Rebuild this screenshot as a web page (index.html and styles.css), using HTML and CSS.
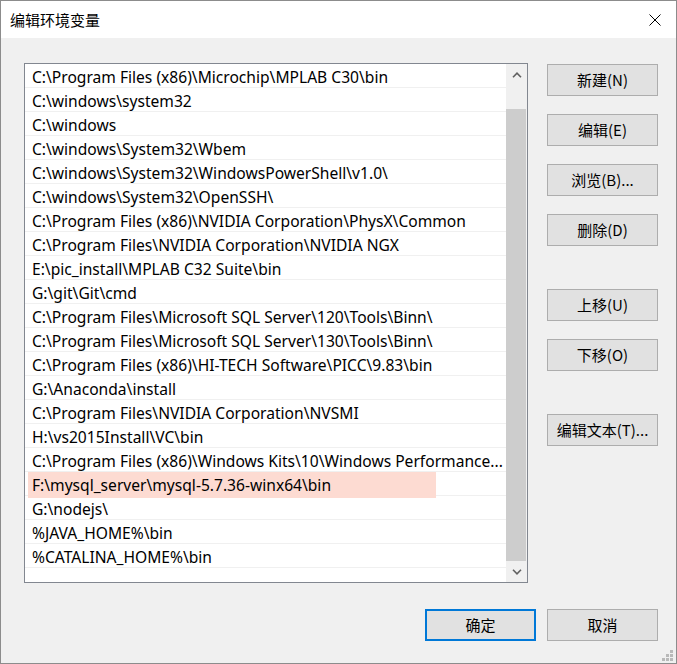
FILE: index.html
```html
<!DOCTYPE html>
<html lang="zh-CN">
<head>
  <meta charset="UTF-8">
  <title>编辑环境变量</title>
  <link rel="stylesheet" href="styles.css">
</head>
<body>
  <div class="dialog">
    <div class="titlebar">
      <span class="title">编辑环境变量</span>
      <svg class="close" width="12" height="12" viewBox="0 0 12 12">
        <path d="M0.5 0.5 L11.5 11.5 M11.5 0.5 L0.5 11.5" stroke="#000" stroke-width="1" fill="none"/>
      </svg>
    </div>

    <div class="content">
      <div class="main">
        <div class="listbox">
          <div class="rows">
            <div class="row"><span>C:\Program Files (x86)\Microchip\MPLAB C30\bin</span></div>
            <div class="row"><span>C:\windows\system32</span></div>
            <div class="row"><span>C:\windows</span></div>
            <div class="row"><span>C:\windows\System32\Wbem</span></div>
            <div class="row"><span>C:\windows\System32\WindowsPowerShell\v1.0\</span></div>
            <div class="row"><span>C:\windows\System32\OpenSSH\</span></div>
            <div class="row"><span>C:\Program Files (x86)\NVIDIA Corporation\PhysX\Common</span></div>
            <div class="row"><span>C:\Program Files\NVIDIA Corporation\NVIDIA NGX</span></div>
            <div class="row"><span>E:\pic_install\MPLAB C32 Suite\bin</span></div>
            <div class="row"><span>G:\git\Git\cmd</span></div>
            <div class="row"><span>C:\Program Files\Microsoft SQL Server\120\Tools\Binn\</span></div>
            <div class="row"><span>C:\Program Files\Microsoft SQL Server\130\Tools\Binn\</span></div>
            <div class="row"><span>C:\Program Files (x86)\HI-TECH Software\PICC\9.83\bin</span></div>
            <div class="row"><span>G:\Anaconda\install</span></div>
            <div class="row"><span>C:\Program Files\NVIDIA Corporation\NVSMI</span></div>
            <div class="row"><span>H:\vs2015Install\VC\bin</span></div>
            <div class="row"><span>C:\Program Files (x86)\Windows Kits\10\Windows Performance...</span></div>
            <div class="row marked"><span>F:\mysql_server\mysql-5.7.36-winx64\bin</span></div>
            <div class="row"><span>G:\nodejs\</span></div>
            <div class="row"><span>%JAVA_HOME%\bin</span></div>
            <div class="row"><span>%CATALINA_HOME%\bin</span></div>
          </div>
          <div class="scrollbar">
            <div class="arrow">
              <svg width="10" height="6" viewBox="0 0 10 6">
                <path d="M1 5.2 L5 1.2 L9 5.2" stroke="#606060" stroke-width="1.6" fill="none"/>
              </svg>
            </div>
            <div class="track"></div>
            <div class="thumb"></div>
            <div class="arrow">
              <svg width="10" height="6" viewBox="0 0 10 6">
                <path d="M1 0.8 L5 4.8 L9 0.8" stroke="#606060" stroke-width="1.6" fill="none"/>
              </svg>
            </div>
          </div>
        </div>

        <div class="side">
          <button class="btn">新建(N)</button>
          <button class="btn">编辑(E)</button>
          <button class="btn">浏览(B)...</button>
          <button class="btn">删除(D)</button>
          <button class="btn group">上移(U)</button>
          <button class="btn">下移(O)</button>
          <button class="btn group">编辑文本(T)...</button>
        </div>
      </div>

      <div class="footer">
        <button class="btn primary">确定</button>
        <button class="btn">取消</button>
      </div>
    </div>

    <svg class="grip" width="12" height="12" viewBox="0 0 12 12">
      <rect x="8" y="0" width="3" height="3" fill="#b9b9b9"/>
      <rect x="4" y="4" width="3" height="3" fill="#b9b9b9"/>
      <rect x="8" y="4" width="3" height="3" fill="#b9b9b9"/>
      <rect x="0" y="8" width="3" height="3" fill="#b9b9b9"/>
      <rect x="4" y="8" width="3" height="3" fill="#b9b9b9"/>
      <rect x="8" y="8" width="3" height="3" fill="#b9b9b9"/>
    </svg>
  </div>
</body>
</html>
```

FILE: styles.css
```css
body {
  margin: 0;
  font-family: "Noto Sans", "Noto Sans CJK SC", sans-serif;
  font-size: 15px;
  color: #000;
  background: #fff;
}

.dialog {
  position: relative;
  box-sizing: border-box;
  width: 677px;
  height: 664px;
  border: 1px solid #8c8c8c;
  background: #f0f0f0;
}

.titlebar {
  height: 37px;
  background: #fff;
  display: flex;
  align-items: center;
  justify-content: space-between;
  padding: 0 15px 0 9px;
}

.title {
  font-size: 15px;
  font-family: "Noto Sans CJK SC", sans-serif;
}

.content {
  padding: 25px 18px 0 23px;
}

.main {
  display: flex;
  gap: 19px;
}

.listbox {
  display: flex;
  width: 504px;
  height: 520px;
  box-sizing: border-box;
  border: 1px solid #828790;
  background: #fff;
}

.rows {
  flex: 1;
  min-width: 0;
}

.row {
  position: relative;
  height: 21px;
  padding: 2px 0 0 7px;
  border-bottom: 1px solid #f0f0f0;
  font-size: 15.6px;
  line-height: 23px;
  white-space: nowrap;
}

.row span {
  position: relative;
}

.row.marked::before {
  content: "";
  position: absolute;
  left: 3px;
  top: 0;
  width: 408px;
  height: 26px;
  background: #fddbd2;
}

.scrollbar {
  width: 21px;
  display: flex;
  flex-direction: column;
  background: #f0f0f0;
}

.arrow {
  height: 21px;
  display: flex;
  align-items: center;
  justify-content: center;
}

.track {
  flex: 1;
}

.thumb {
  height: 452px;
  margin-right: 1px;
  background: #cdcdcd;
}

.side {
  display: flex;
  flex-direction: column;
  gap: 18px;
  padding-top: 1px;
}

.btn {
  box-sizing: border-box;
  width: 111px;
  height: 32px;
  padding: 0 0 2px;
  border: 1px solid #adadad;
  background: #e1e1e1;
  font-family: "Noto Sans CJK SC", sans-serif;
  font-size: 15px;
  color: #000;
}

.btn.group {
  margin-top: 25px;
}

.btn.primary {
  border: 2px solid #0078d7;
}

.footer {
  display: flex;
  justify-content: flex-end;
  gap: 11px;
  margin-top: 26px;
}

.grip {
  position: absolute;
  right: 2px;
  bottom: 1px;
}
```
